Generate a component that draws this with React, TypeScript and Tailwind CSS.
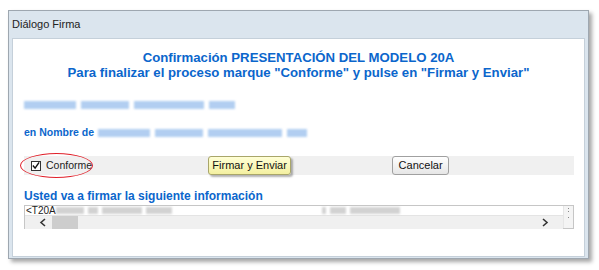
import React from "react";

const Blur = ({ w, className = "" }: { w: number; className?: string }) => (
  <span
    className={`inline-block h-[8px] bg-[#9fc3ee] blur-[1px] ${className}`}
    style={{ width: w }}
  />
);

const BlurGray = ({ w }: { w: number }) => (
  <span className="inline-block h-[7px] bg-[#c8c8c8] blur-[1px]" style={{ width: w }} />
);

export default function App() {
  return (
    <div className="w-[599px] h-[270px] bg-white font-['Liberation_Sans',Arial,sans-serif] overflow-hidden">
      <div className="ml-[8px] mt-[10px] w-[581px] h-[249px] border border-[#9ea7b0] bg-[#dbe5ee] shadow-[3px_3px_4px_rgba(0,0,0,0.35)] flex flex-col">
        <div className="h-[27px] flex items-center px-[3px] text-[11px] text-[#222]">
          Diálogo Firma
        </div>
        <div className="mx-[3px] h-[219px] bg-white border border-[#c5d0da] flex flex-col px-[11px]">
          <div className="mt-[11px] text-center text-[13.2px] leading-[15px] font-bold text-[#0b66cc]">
            <div>Confirmación PRESENTACIÓN DEL MODELO 20A</div>
            <div>Para finalizar el proceso marque "Conforme" y pulse en "Firmar y Enviar"</div>
          </div>

          <div className="mt-[19px] h-[12px] flex items-center gap-[5px] opacity-80">
            <Blur w={52} />
            <Blur w={48} />
            <Blur w={70} />
            <Blur w={26} />
          </div>

          <div className="mt-[15px] h-[14px] flex items-center gap-[4px] text-[10.5px] font-bold text-[#0b66cc]">
            <span>en Nombre de</span>
            <span className="flex items-center gap-[5px] opacity-80">
              <Blur w={52} />
              <Blur w={48} />
              <Blur w={74} />
              <Blur w={20} />
            </span>
          </div>

          <div className="relative mt-[16px] h-[19px] w-[550px] bg-[#f0f0f0] flex items-center">
            <span className="ml-[7px] w-[10px] h-[10px] border border-[#333] bg-white flex items-center justify-center">
              <svg width="9" height="9" viewBox="0 0 9 9">
                <path d="M1 4.5 L3.5 7.5 L8 1" fill="none" stroke="#111" strokeWidth="1.6" />
              </svg>
            </span>
            <span className="ml-[5px] text-[10.5px] text-[#222]">Conforme</span>
            <span className="absolute left-[-4px] top-[-3px] w-[73px] h-[25px] rounded-[50%] border-[1.5px] border-[#e0202a]" />
            <button className="ml-[116px] h-[19px] w-[83px] text-[11px] text-[#111] bg-gradient-to-b from-[#ffffd6] to-[#f4f0a0] border border-[#a9a66a] rounded-[3px] shadow-[2px_2px_2px_rgba(0,0,0,0.3)]">
              Firmar y Enviar
            </button>
            <button className="ml-[101px] h-[19px] w-[57px] text-[11px] text-[#111] bg-gradient-to-b from-[#ffffff] to-[#e6e6e6] border border-[#a0a0a0] rounded-[3px]">
              Cancelar
            </button>
          </div>

          <div className="mt-[14px] text-[12px] leading-[15px] font-bold text-[#0b66cc]">
            Usted va a firmar la siguiente información
          </div>

          <div className="mt-[1px] w-[550px] h-[24px] border border-[#c6c6c6] flex">
            <div className="flex-1 flex flex-col">
              <div className="h-[9px] flex items-center text-[10px] leading-[10px] text-[#222]">
                <span className="ml-[1px]">&lt;T20A</span>
                <span className="flex items-center gap-[4px] opacity-80">
                  <BlurGray w={28} />
                  <BlurGray w={10} />
                  <BlurGray w={40} />
                  <BlurGray w={26} />
                </span>
                <span className="ml-[150px] flex items-center gap-[4px] opacity-80">
                  <BlurGray w={4} />
                  <BlurGray w={16} />
                  <BlurGray w={50} />
                </span>
              </div>
              <div className="flex-1 bg-[#f0f0f0] border-t border-[#e4e4e4] flex items-center">
                <svg className="ml-[14px]" width="8" height="9" viewBox="0 0 8 9">
                  <path d="M6 1 L2 4.5 L6 8" fill="none" stroke="#333" strokeWidth="1.6" />
                </svg>
                <span className="ml-[5px] w-[26px] h-[13px] bg-[#cdcdcd]" />
                <svg className="ml-auto mr-[14px]" width="8" height="9" viewBox="0 0 8 9">
                  <path d="M2 1 L6 4.5 L2 8" fill="none" stroke="#333" strokeWidth="1.6" />
                </svg>
              </div>
            </div>
            <div className="w-[10px] bg-[#f4f4f4] border-l border-[#e6e6e6] flex flex-col items-center pt-[2px] gap-[2px]">
              <span className="w-[1px] h-[1px] bg-[#888]" />
              <span className="w-[1px] h-[1px] bg-[#888]" />
              <span className="mt-[3px] w-[1px] h-[1px] bg-[#888]" />
            </div>
          </div>
        </div>
      </div>
    </div>
  );
}
